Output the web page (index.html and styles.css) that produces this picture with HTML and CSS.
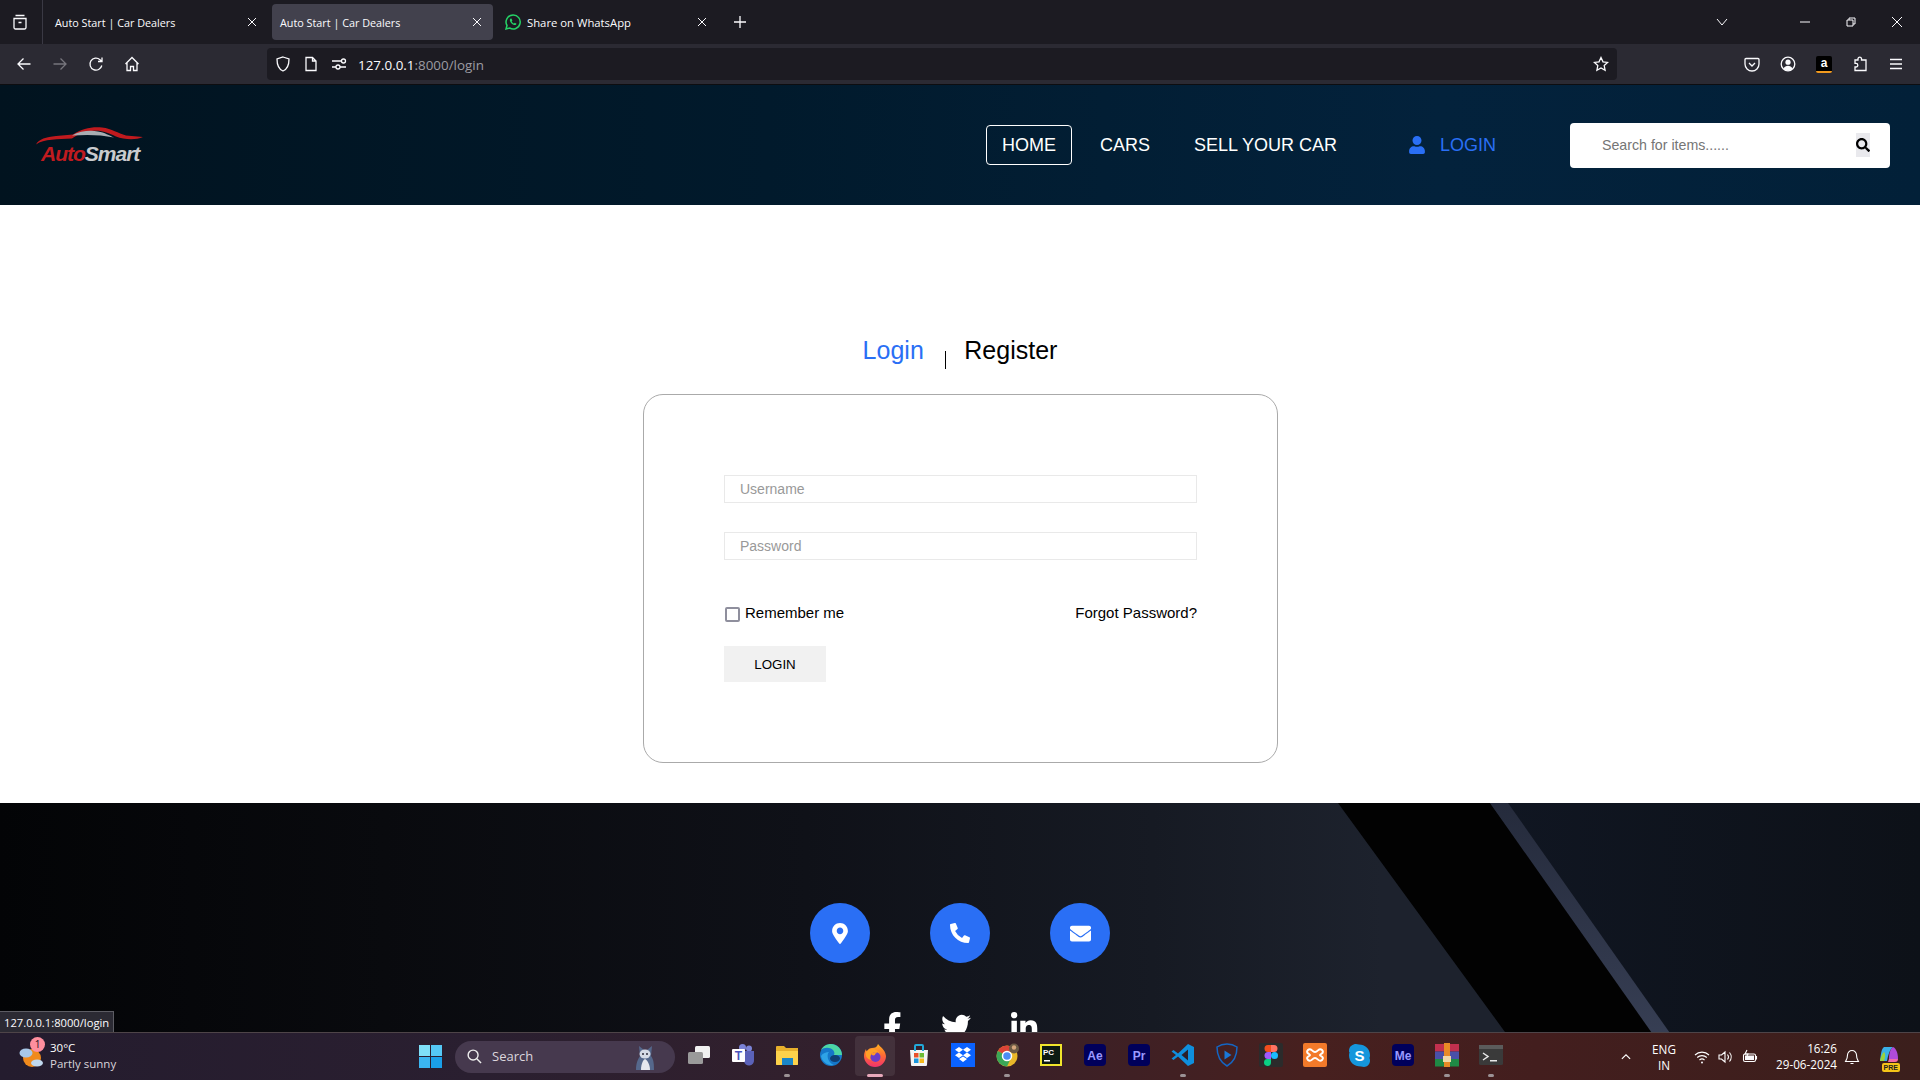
FILE: index.html
```html
<!DOCTYPE html>
<html lang="en">
<head>
<meta charset="utf-8">
<title>Auto Start | Car Dealers</title>
<link rel="stylesheet" href="styles.css">
</head>
<body>
<div class="browser">
  <div class="tabbar">
    <div class="tab-side">
      <svg class="ci" viewBox="0 0 16 16"><path d="M3.5 1.5h9M2 4.5h12v9a1.5 1.5 0 0 1-1.5 1.5h-9A1.5 1.5 0 0 1 2 13.500zM6.500 8.500h3"/></svg>
    </div>
    <div class="tab"><span class="tab-title">Auto Start | Car Dealers</span><svg class="tab-x" viewBox="0 0 10 10"><path d="M1 1l8 8M9 1l-8 8"/></svg></div>
    <div class="tab tab-active"><span class="tab-title">Auto Start | Car Dealers</span><svg class="tab-x" viewBox="0 0 10 10"><path d="M1 1l8 8M9 1l-8 8"/></svg></div>
    <div class="tab tab-wa">
      <svg class="wa" viewBox="0 0 16 16"><path d="M8 1a7 7 0 0 0-6 10.500L1 15l3.600-1A7 7 0 1 0 8 1z" fill="none" stroke="#25d366" stroke-width="1.500"/><path d="M5.700 4.500c-.9.500-1.100 1.700-.5 3 .8 1.700 2.300 3 3.900 3.500 1.200.3 2.200-.2 2.400-1.200l-1.700-1-.8.800c-1-.4-1.900-1.300-2.300-2.300l.7-.8-1-2z" fill="#25d366"/></svg>
      <span class="tab-title tab-title-wa">Share on WhatsApp</span><svg class="tab-x" viewBox="0 0 10 10"><path d="M1 1l8 8M9 1l-8 8"/></svg>
    </div>
    <svg class="tab-plus" viewBox="0 0 14 14"><path d="M7 1v12M1 7h12"/></svg>
    <div class="win-ctrls">
      <svg class="win-chev" viewBox="0 0 12 8"><path d="M1 1l5 6 5-6"/></svg>
      <svg class="win-btn win-min" viewBox="0 0 10 10"><path d="M0 5h10"/></svg>
      <svg class="win-btn win-res" viewBox="0 0 10 10"><path d="M1 3h6v6H1zM3 3V1h6v6H7"/></svg>
      <svg class="win-btn" viewBox="0 0 10 10"><path d="M0 0l10 10M10 0L0 10"/></svg>
    </div>
  </div>

  <div class="toolbar">
    <div class="nav-btns">
      <svg class="ci" viewBox="0 0 16 16"><path d="M14.500 8H2M7.500 2.500L2 8l5.500 5.500"/></svg>
      <svg class="ci ci-dim" viewBox="0 0 16 16"><path d="M1.500 8H14M8.500 2.500L14 8l-5.500 5.500"/></svg>
      <svg class="ci" viewBox="0 0 16 16"><path d="M13.800 9.500A6 6 0 1 1 12 3.700L14 5.500M14 1.500v4h-4"/></svg>
      <svg class="ci" viewBox="0 0 16 16"><path d="M1.500 8L8 1.500 14.500 8M3 7v7.500h3.500v-4h3v4H13V7"/></svg>
    </div>
    <div class="urlbar">
      <svg class="ci" viewBox="0 0 16 16"><path d="M8 1l6 2c0 6-1 10-6 12C3 13 2 9 2 3z"/></svg>
      <svg class="ci" viewBox="0 0 16 16"><path d="M3 1.500h6.500L13 5v9.500H3zM9.500 1.500V5H13"/></svg>
      <svg class="ci" viewBox="0 0 16 16"><path d="M1 5h9M1 11h4M9 11h6"/><circle cx="12.500" cy="5" r="2"/><circle cx="7" cy="11" r="2"/></svg>
      <span class="url"><span class="url-host">127.0.0.1</span>:8000/login</span>
      <svg class="ci url-star" viewBox="0 0 16 16"><path d="M8 1.500l2 4.300 4.600.6-3.400 3.200.9 4.700L8 12l-4.100 2.300.9-4.700L1.400 6.400 6 5.800z"/></svg>
    </div>
    <div class="tool-right">
      <svg class="ci" viewBox="0 0 16 16"><path d="M2 2.500h12a1 1 0 0 1 1 1V8a7 7 0 0 1-14 0V3.500a1 1 0 0 1 1-1zM5 7l3 3 3-3"/></svg>
      <svg class="ci" viewBox="0 0 16 16"><circle cx="8" cy="8" r="6.800"/><circle class="ci-fill" cx="8" cy="6.200" r="2.600"/><path class="ci-fill" d="M3.500 12.500c1-2 2.700-2.800 4.500-2.800s3.500.8 4.500 2.800a6 6 0 0 1-9 0z"/></svg>
      <span class="amazon">a</span>
      <svg class="ci" viewBox="0 0 16 16"><path d="M6 2.500a1.800 1.800 0 0 1 3.500 0V4H14v10.500H3V11h1a1.800 1.800 0 0 0 0-3.600H3V4h3z"/></svg>
      <svg class="ci" viewBox="0 0 16 16"><path d="M2 3.500h12M2 8h12M2 12.500h12"/></svg>
    </div>
  </div>

  <div class="viewport">
    <header class="site-header">
      <a class="logo">
        <svg class="logo-car" viewBox="0 0 107 20">
          <path d="M0 17.500C3 12 10 10 20 9L37 7.500C46 1.500 56-.5 66 .5c10 1 16 6 24 8l17 1.500c-8 3.500-19 2.500-27-.5C72 6 66 3 56 4c-9 1-15 4-20 7.500-14 1-28 0-36 6z" fill="#c01a1e"/>
          <path d="M36 8.500C44 4 54 3 62 4.500c7 1 11 4 16 6-14-3-28-3-42-2z" fill="#a9adb2"/>
        </svg>
        <span class="logo-text"><span class="logo-auto">Auto</span><span class="logo-smart">Smart</span></span>
      </a>
      <nav class="site-nav">
        <a class="nav-link nav-home">HOME</a>
        <a class="nav-link nav-cars">CARS</a>
        <a class="nav-link nav-sell">SELL YOUR CAR</a>
        <a class="nav-link nav-login">
          <svg class="user-ic" viewBox="0 0 448 512"><path d="M224 256c70.700 0 128-57.300 128-128S294.700 0 224 0 96 57.300 96 128s57.300 128 128 128zm89.600 32h-16.700c-22.200 10.200-46.900 16-72.900 16s-50.600-5.800-72.900-16h-16.700C60.200 288 0 348.200 0 422.400V464c0 26.500 21.500 48 48 48h352c26.500 0 48-21.500 48-48v-41.600c0-74.200-60.200-134.400-134.400-134.400z"/></svg>
          LOGIN
        </a>
      </nav>
      <form class="site-search">
        <input class="search-input" type="text" placeholder="Search for items......">
        <span class="search-btn"><svg viewBox="0 0 512 512"><path d="M505 442.700L405.300 343c-4.500-4.500-10.600-7-17-7H372c27.600-35.300 44-79.700 44-128C416 93.100 322.900 0 208 0S0 93.100 0 208s93.100 208 208 208c48.300 0 92.700-16.400 128-44v16.300c0 6.400 2.500 12.500 7 17l99.700 99.700c9.400 9.400 24.600 9.400 33.900 0l28.300-28.300c9.400-9.400 9.400-24.600.1-34zM208 336c-70.700 0-128-57.200-128-128 0-70.700 57.200-128 128-128 70.700 0 128 57.200 128 128 0 70.700-57.200 128-128 128z"/></svg></span>
      </form>
    </header>

    <main class="login-page">
      <div class="auth-tabs">
        <a class="auth-tab auth-active">Login</a>
        <span class="auth-sep"></span>
        <a class="auth-tab">Register</a>
      </div>
      <form class="login-card">
        <input class="field field-user" type="text" placeholder="Username">
        <input class="field field-pass" type="password" placeholder="Password">
        <div class="login-row">
          <label class="remember"><input class="check" type="checkbox"><span>Remember me</span></label>
          <a class="forgot">Forgot Password?</a>
        </div>
        <button class="login-btn" type="button">LOGIN</button>
      </form>
    </main>

    <footer class="site-footer">
      <svg class="footer-bg" viewBox="0 0 1920 277" preserveAspectRatio="none">
        <defs>
          <linearGradient id="fr" x1="0" x2="1" y1="0" y2="0"><stop offset="0" stop-color="#101622"/><stop offset="1" stop-color="#0d1118"/></linearGradient>
          <linearGradient id="fs" x1="0" x2="0" y1="0" y2="1"><stop offset="0" stop-color="#252b3c"/><stop offset="1" stop-color="#3a4258"/></linearGradient>
        </defs>
        <polygon points="1490,0 1920,0 1920,277 1685,277" fill="url(#fr)"/>
        <polygon points="1338,0 1490,0 1690,277 1540,277" fill="#020202"/>
        <polygon points="1490,0 1508,0 1703,277 1685,277" fill="url(#fs)"/>
      </svg>
      <div class="contact-row">
        <span class="contact-dot"><svg class="ic-pin" viewBox="0 0 384 512"><path d="M172.268 501.670C26.970 291.031 0 253.280 0 192 0 85.961 85.961 0 192 0s192 85.961 192 192c0 61.280-26.970 99.031-172.268 309.670-9.535 13.774-29.930 13.773-39.464 0zM192 272c44.183 0 80-35.817 80-80s-35.817-80-80-80-80 35.817-80 80 35.817 80 80 80z"/></svg></span>
        <span class="contact-dot"><svg class="ic-phone" viewBox="0 0 512 512"><path d="M497.390 361.800l-112-48a24 24 0 0 0-28 6.900l-49.600 60.600A370.660 370.660 0 0 1 130.600 204.110l60.600-49.600a23.940 23.940 0 0 0 6.900-28l-48-112A24.160 24.160 0 0 0 122.600.610l-104 24A24 24 0 0 0 0 48c0 256.500 207.900 464 464 464a24 24 0 0 0 23.400-18.600l24-104a24.290 24.290 0 0 0-14.010-27.600z"/></svg></span>
        <span class="contact-dot"><svg class="ic-mail" viewBox="0 0 512 512"><path d="M502.300 190.800c3.900-3.100 9.700-.2 9.700 4.700V400c0 26.500-21.500 48-48 48H48c-26.500 0-48-21.500-48-48V195.600c0-5 5.700-7.800 9.700-4.700 22.400 17.400 52.100 39.500 154.100 113.600 21.100 15.400 56.700 47.800 92.200 47.600 35.700.3 72-32.800 92.300-47.600 102-74.100 131.600-96.300 154-113.700zM256 320c23.200.4 56.600-29.200 73.400-41.400 132.700-96.300 142.800-104.700 173.400-128.700 5.800-4.500 9.200-11.500 9.200-18.900v-19c0-26.500-21.500-48-48-48H48C21.500 64 0 85.500 0 112v19c0 7.400 3.400 14.300 9.200 18.900 30.600 23.900 40.700 32.400 173.400 128.700 16.800 12.200 50.200 41.800 73.400 41.400z"/></svg></span>
      </div>
      <div class="social-row">
        <svg class="soc soc-f" viewBox="0 0 320 512"><path d="M279.140 288l14.220-92.660h-88.910v-60.130c0-25.350 12.420-50.060 52.240-50.060h40.420V6.260S260.430 0 225.360 0c-73.220 0-121.080 44.380-121.080 124.720v70.620H22.890V288h81.390v224h100.170V288z"/></svg>
        <svg class="soc soc-t" viewBox="0 0 512 512"><path d="M459.370 151.716c.325 4.548.325 9.097.325 13.645 0 138.720-105.583 298.558-298.558 298.558-59.452 0-114.680-17.219-161.137-47.106 8.447.974 16.568 1.299 25.340 1.299 49.055 0 94.213-16.568 130.274-44.832-46.132-.975-84.792-31.188-98.112-72.772 6.498.974 12.995 1.624 19.818 1.624 9.421 0 18.843-1.300 27.614-3.573-48.081-9.747-84.143-51.980-84.143-102.985v-1.299c13.969 7.797 30.214 12.670 47.431 13.319-28.264-18.843-46.781-51.005-46.781-87.391 0-19.492 5.197-37.360 14.294-52.954 51.655 63.675 129.300 105.258 216.365 109.807-1.624-7.797-2.599-15.918-2.599-24.040 0-57.828 46.782-104.934 104.934-104.934 30.213 0 57.502 12.670 76.670 33.137 23.715-4.548 46.456-13.320 66.599-25.340-7.798 24.366-24.366 44.833-46.132 57.827 21.117-2.273 41.584-8.122 60.426-16.243-14.292 20.791-32.161 39.308-52.628 54.253z"/></svg>
        <svg class="soc soc-in" viewBox="0 0 448 512"><path d="M100.280 448H7.400V148.900h92.880zM53.790 108.100C24.090 108.100 0 83.500 0 53.800a53.790 53.790 0 0 1 107.580 0c0 29.700-24.100 54.300-53.790 54.300zM447.900 448h-92.680V302.400c0-34.700-.7-79.200-48.290-79.200-48.290 0-55.690 37.700-55.690 76.700V448h-92.780V148.900h89.080v40.800h1.300c12.400-23.500 42.690-48.300 87.880-48.300 94 0 111.280 61.900 111.280 142.300V448z"/></svg>
      </div>
    </footer>
    <div class="status-tip">127.0.0.1:8000/login</div>
  </div>
</div>

<div class="taskbar">
  <div class="weather">
    <span class="weather-ic">
      <svg viewBox="0 0 26 26"><circle cx="14" cy="15" r="9" fill="#f08a1c"/><ellipse cx="8" cy="10" rx="6.500" ry="4.500" fill="#a8c8e8"/><ellipse cx="19" cy="20" rx="6" ry="3.500" fill="#c0d8ee"/></svg>
      <span class="weather-badge">1</span>
    </span>
    <span class="weather-text"><span>30°C</span><span class="weather-sub">Partly sunny</span></span>
  </div>
  <svg class="win-logo" viewBox="0 0 24 24"><path fill="#7fe0f8" d="M0 0h11.500v11.500H0z"/><path fill="#55c8f5" d="M12.500 0H24v11.500H12.500z"/><path fill="#3bb5f0" d="M0 12.500h11.500V24H0z"/><path fill="#1a9fe8" d="M12.500 12.500H24V24H12.500z"/></svg>
  <div class="tb-search">
    <svg class="tb-q" viewBox="0 0 16 16"><circle cx="6.500" cy="6.500" r="5.300"/><path d="M10.500 10.500L15 15"/></svg>
    <span class="tb-search-label">Search</span>
    <svg class="tb-owl" viewBox="0 0 24 26"><path d="M3 26c0-7 2-11 4-14L6 2l5 4h3l5-4-1 10c3 4 3 9 3 14z" fill="#55688c"/><ellipse cx="12" cy="10" rx="5.500" ry="4.500" fill="#d5dbe6"/><circle cx="10" cy="10" r="1" fill="#2b2b3a"/><circle cx="14" cy="10" r="1" fill="#2b2b3a"/><path d="M8 26c0-6 2-10 4-11 2 1 5 5 5 11z" fill="#e4e7ee"/></svg>
  </div>
  <div class="tb-apps">
    <span class="app"><svg viewBox="0 0 24 24"><rect x="8" y="3" width="15" height="12" rx="1.500" fill="#f1f1f1"/><rect x="1" y="9" width="15" height="12" rx="1.500" fill="#9a9a9a"/></svg></span>
    <span class="app"><svg viewBox="0 0 24 24"><circle cx="18" cy="5.500" r="3" fill="#7b83d6"/><circle cx="11.500" cy="4.500" r="3.500" fill="#7b83d6"/><path d="M10 8h13v9a5 5 0 0 1-10 1H10z" fill="#5b62b8"/><rect x="1" y="6" width="13" height="13" rx="1" fill="#fff"/><text class="app-t app-t-teams" x="7.500" y="16.500">T</text></svg></span>
    <span class="app app-run"><svg viewBox="0 0 24 24"><path d="M1 4a1 1 0 0 1 1-1h7l2 2h12v16a1 1 0 0 1-1 1H2a1 1 0 0 1-1-1z" fill="#e8b02c"/><path d="M1 8h22v13a1 1 0 0 1-1 1H2a1 1 0 0 1-1-1z" fill="#fdd24b"/><rect x="7" y="15" width="11" height="7" fill="#1a86c8"/></svg></span>
    <span class="app"><svg viewBox="0 0 24 24"><circle cx="12" cy="12" r="11" fill="#1577c9"/><path d="M23 12c0-6-5-11-11-11C8 1 4 3 2 7c3-3 9-3 12 0 1 1 2 3 1 5h8z" fill="#4dd6a4"/><ellipse cx="16" cy="15.500" rx="5" ry="3.500" fill="#0f3f74"/><path d="M10 9c-3 3-1 11 5 13-6 1-12-3-13-9 2-3 5-4 8-4z" fill="#2ea3e6"/></svg></span>
    <span class="app app-cur"><svg viewBox="0 0 24 24"><defs><linearGradient id="ff" x1="0" x2="0" y1="0" y2="1"><stop offset="0" stop-color="#ffb21f"/><stop offset=".5" stop-color="#ff6a35"/><stop offset="1" stop-color="#f0326e"/></linearGradient></defs><path d="M15 1c2 3 7 5 8 12a11 11 0 0 1-22 0c0-3 1-5 2-7 0 1 .5 2 1 2.500C5 6 7 5 9 5c3 0 5-1 6-4z" fill="url(#ff)"/><path d="M3 9c2-3 7-4 10-2 4 2 5 6 3 9-2-5-6-5-8-3-1 1-1 3 0 4-4-1-6-4-5-8z" fill="#ffa126"/><circle cx="12.500" cy="14" r="5" fill="#6a3cc8"/><path d="M8 11c1-2 5-3 7-1-2 0-3 .5-3 2-2 1-3 0-4-1z" fill="#ff9a26"/></svg></span>
    <span class="app"><svg viewBox="0 0 24 24"><path d="M3 7h18l-1 15a1 1 0 0 1-1 1H5a1 1 0 0 1-1-1z" fill="#f4f4f4"/><path d="M8 8V3a1 1 0 0 1 1-1h6a1 1 0 0 1 1 1v5" fill="none" stroke="#22a8d8" stroke-width="2"/><path fill="#e8502a" d="M7 10h4.500v4.500H7z"/><path fill="#6dbb33" d="M12.500 10H17v4.500h-4.500z"/><path fill="#1b96dd" d="M7 15.500h4.500V20H7z"/><path fill="#f6b91c" d="M12.500 15.500H17V20h-4.500z"/></svg></span>
    <span class="app"><svg viewBox="0 0 24 24"><rect width="24" height="24" fill="#0a62ff"/><path fill="#fff" d="M8 4l4 2.800L8 9.500 4 6.800zM16 4l4 2.800-4 2.700-4-2.700zM8 9.500l4 2.800-4 2.700-4-2.700zM16 9.500l4 2.800-4 2.700-4-2.700zM8 16l4-2.500 4 2.500-4 3z"/></svg></span>
    <span class="app app-run"><svg viewBox="0 0 24 24"><circle cx="12" cy="13" r="10.500" fill="#e9b72a"/><path d="M12 13L2.800 8A10.500 10.500 0 0 1 21.500 9H12z" fill="#dc4437"/><path d="M2.800 8A10.500 10.500 0 0 0 12 23.500L16 15z" fill="#3aa757"/><circle cx="12" cy="13" r="4.500" fill="#4c8cf5" stroke="#fff" stroke-width="1.500"/><circle cx="19" cy="5.500" r="5" fill="#6b5a45"/><circle cx="19" cy="4.500" r="2.200" fill="#d6a67c"/></svg></span>
    <span class="app"><svg viewBox="0 0 24 24"><rect x="1" y="1" width="22" height="22" fill="#f0e52c"/><rect x="3" y="3" width="18" height="18" fill="#0d1b13"/><text class="app-t app-t-pc" x="9.500" y="12">PC</text><path d="M5 17h6v1.500H5z" fill="#fff"/></svg></span>
    <span class="app"><svg viewBox="0 0 24 24"><rect x="1" y="1" width="22" height="22" rx="4" fill="#00005b"/><text class="app-t app-t-ae" x="12" y="17">Ae</text></svg></span>
    <span class="app"><svg viewBox="0 0 24 24"><rect x="1" y="1" width="22" height="22" rx="4" fill="#00005b"/><text class="app-t app-t-ae" x="12" y="17">Pr</text></svg></span>
    <span class="app app-run"><svg viewBox="0 0 24 24"><path d="M17 1l6 3v16l-6 3-10-9.500L2.500 17 .5 15.500 5 12 .5 8.500 2.500 7 7 10.500z" fill="#0f8fdd"/><path d="M17 6.500L10.500 12l6.500 5.500z" fill="#2b2028"/></svg></span>
    <span class="app"><svg viewBox="0 0 24 24"><path d="M12 1c4 0 7 1 10 3 0 9-3 15-10 19C5 19 2 13 2 4c3-2 6-3 10-3z" fill="none" stroke="#1466c4" stroke-width="1.500"/><path d="M9.500 7.500l7 4.500-7 4.500z" fill="#1a78d8"/></svg></span>
    <span class="app"><svg viewBox="0 0 24 24"><rect width="24" height="24" rx="2" fill="#2b2b2b"/><path d="M12 2H9a3.500 3.500 0 0 0 0 7h3z" fill="#f24e1e"/><path d="M12 2h3a3.500 3.500 0 0 1 0 7h-3z" fill="#ff7262"/><path d="M12 9H9a3.500 3.500 0 0 0 0 7h3z" fill="#a259ff"/><circle cx="15.500" cy="12.500" r="3.500" fill="#1abcfe"/><path d="M9 16h3v3.500A3.500 3.500 0 1 1 9 16z" fill="#0acf83"/></svg></span>
    <span class="app"><svg viewBox="0 0 24 24"><rect width="24" height="24" rx="2" fill="#f37a2a"/><path d="M5 7c3-3 4 2 7 2s4-5 7-2-2 4-2 5 5 2 2 5-4-2-7-2-4 5-7 2 2-4 2-5-5-2-2-5z" fill="none" stroke="#fff" stroke-width="2"/></svg></span>
    <span class="app"><svg viewBox="0 0 24 24"><path d="M2 8c0-5 4-7 7-7 1 0 2 .5 3 .5C18 1.500 23 6 23 12c0 1 0 2-.5 3 .5 1 .5 2 .5 3 0 3-3 6-6 6-1 0-2-.5-3-.5C7 23.500 2 19 2 12c0-1 .5-2 .5-3C2 9 2 8.500 2 8z" fill="#1596dc"/><text class="app-t app-t-sk" x="12.500" y="17.500">S</text></svg></span>
    <span class="app"><svg viewBox="0 0 24 24"><rect x="1" y="1" width="22" height="22" rx="4" fill="#00005b"/><text class="app-t app-t-ae" x="12" y="17">Me</text></svg></span>
    <span class="app app-run"><svg viewBox="0 0 24 24"><rect y="1" width="24" height="7.500" fill="#c2304e"/><rect y="8.500" width="24" height="7.500" fill="#4a50a8"/><rect y="16" width="24" height="7.500" fill="#1f8a45"/><rect x="9" y="0" width="6" height="24" fill="#e88a26"/><rect x="8" y="13" width="8" height="6" fill="#f0d8a8"/></svg></span>
    <span class="app app-run"><svg viewBox="0 0 24 24"><rect y="2" width="24" height="20" rx="1.500" fill="#3a3a3a"/><rect y="2" width="24" height="4" fill="#5b5b5b"/><path d="M4 10l5 3.500-5 3.500" fill="none" stroke="#e8e8e8" stroke-width="1.500"/><path d="M11 17h7v1.500h-7z" fill="#e8e8e8"/></svg></span>
  </div>
  <div class="tray">
    <svg class="tray-ic tray-caret" viewBox="0 0 16 16"><path d="M2.500 10.500L8 5l5.500 5.500"/></svg>
    <span class="tray-lang"><span>ENG</span><span>IN</span></span>
    <svg class="tray-ic" viewBox="0 0 16 16"><path d="M1 6a10 10 0 0 1 14 0M3.200 8.500a7 7 0 0 1 9.600 0M5.500 11a3.800 3.800 0 0 1 5 0"/><circle class="ci-fill" cx="8" cy="13.500" r="1"/></svg>
    <svg class="tray-ic" viewBox="0 0 16 16"><path d="M1 6v4h2.500L7 13V3L3.500 6zM9.500 5.500a4 4 0 0 1 0 5M11.500 3.500a7 7 0 0 1 0 9"/></svg>
    <svg class="tray-ic" viewBox="0 0 16 16"><rect x="1.500" y="5" width="12" height="7.500" rx="1.500"/><path class="ci-fill" d="M3 6.500h9v4.500H3z"/><path d="M14.500 7v3.500M5 1l-2 4h3l-1.500 3"/></svg>
    <span class="tray-time"><span>16:26</span><span>29-06-2024</span></span>
    <svg class="tray-ic tray-bell" viewBox="0 0 16 16"><path d="M8 1.500a4.500 4.500 0 0 1 4.500 4.500c0 4 1.500 5.500 2 6.500h-13c.5-1 2-2.500 2-6.500A4.500 4.500 0 0 1 8 1.500zM6.500 14.500h3"/></svg>
    <span class="copilot">
      <svg viewBox="0 0 24 24"><path d="M8 2h9c-3 2-5 8-6 14H4C5 10 5 4 8 2z" fill="#3ab0e8"/><path d="M4 16c1-5 2-7 4-9 2 2 1 6 0 9z" fill="#9bd23c"/><path d="M17 2c3 1 5 6 5 12H13c0-5 1-10 4-12z" fill="#b04bd8"/><path d="M13 14h9c0 2-1 3-3 3h-7z" fill="#f06aa8"/></svg>
      <span class="copilot-pre">PRE</span>
    </span>
  </div>
</div>
</body>
</html>
```

FILE: styles.css
```css
* { box-sizing: border-box; }
html, body { margin: 0; height: 100%; overflow: hidden; }
body {
  display: flex;
  flex-direction: column;
  height: 100vh;
  font-family: "Liberation Sans", Arial, sans-serif;
  color: #000;
  background: #fff;
}
a { text-decoration: none; color: inherit; }
svg { display: block; flex: none; }

.browser { flex: 1; min-height: 0; display: flex; flex-direction: column; }

/* icon strokes */
.ci { width: 16px; height: 16px; fill: none; stroke: #fbfbfe; stroke-width: 1.300; }
.ci-dim { stroke: #77767d; }
.ci-fill { fill: #fbfbfe; stroke: none; }

/* tab strip */
.tabbar {
  height: 44px;
  flex: none;
  display: flex;
  align-items: center;
  background: #1c1b22;
  font-family: "Open Sans", "Noto Sans", sans-serif;
  font-size: 10.800px;
  color: #fbfbfe;
}
.tab-side {
  width: 43px;
  height: 44px;
  flex: none;
  display: flex;
  align-items: center;
  padding-left: 12px;
  border-right: 1px solid #3a3944;
}
.tab {
  width: 229px;
  height: 36px;
  flex: none;
  display: flex;
  align-items: center;
  padding: 0 15px 0 12px;
  border-radius: 4px;
}
.tab-active { width: 221px; padding: 0 11px 0 8px; background: #42414d; }
.tab-wa { width: 229px; padding-left: 12px; gap: 6px; }
.tab-title { flex: 1; white-space: nowrap; }
.tab-title-wa { font-size: 11.300px; }
.tab-x { width: 10px; height: 10px; fill: none; stroke: #fbfbfe; stroke-width: 1; margin-right: 0; }
.wa { width: 16px; height: 18px; }
.tab-plus { width: 14px; height: 14px; margin-left: 11px; fill: none; stroke: #fbfbfe; stroke-width: 1.300; }
.win-ctrls { margin-left: auto; display: flex; align-items: center; padding-right: 18px; }
.win-chev { width: 12px; height: 8px; fill: none; stroke: #fbfbfe; stroke-width: 1; margin-right: 72px; }
.win-btn { width: 10px; height: 10px; fill: none; stroke: #fbfbfe; stroke-width: 1; }
.win-min { margin-right: 36px; }
.win-res { margin-right: 36px; }

/* navigation bar */
.toolbar {
  height: 41px;
  flex: none;
  display: flex;
  align-items: center;
  background: #2b2a33;
  border-bottom: 1px solid #0d0d10;
  font-family: "Open Sans", "Noto Sans", sans-serif;
}
.nav-btns { width: 267px; flex: none; display: flex; gap: 20px; padding-left: 16px; }
.urlbar {
  width: 1350px;
  height: 32px;
  flex: none;
  display: flex;
  align-items: center;
  gap: 12px;
  padding: 0 8px 0 8px;
  border-radius: 4px;
  background: #1c1b22;
}
.url { margin-left: -1px; padding-top: 2px; font-size: 13.400px; color: #9c9ba3; }
.url-host { color: #fbfbfe; }
.url-star { margin-left: auto; }
.tool-right { display: flex; align-items: center; gap: 20px; padding-left: 127px; }
.amazon {
  width: 16px;
  height: 17px;
  display: block;
  background: #000;
  border-radius: 2px;
  color: #fff;
  font: 700 12px/14px "Liberation Sans", sans-serif;
  text-align: center;
  border-bottom: 2px solid #f39a1e;
}

/* page area */
.viewport { position: relative; flex: 1; min-height: 0; overflow: hidden; display: flex; flex-direction: column; }

.site-header {
  height: 120px;
  flex: none;
  display: flex;
  align-items: center;
  padding: 0 30px 0 36px;
  background: linear-gradient(90deg, #01131f 0%, #011a2c 40%, #03223c 75%, #022038 100%);
}
.logo { width: 107px; flex: none; display: flex; flex-direction: column; margin-top: 1px; }
.logo-car { width: 107px; height: 20px; }
.logo-text {
  margin: -4px 0 0 5px;
  font-size: 21px;
  line-height: 22px;
  font-weight: 700;
  font-style: italic;
  letter-spacing: -1px;
  white-space: nowrap;
}
.logo-auto { color: #c01b1f; }
.logo-smart { color: #c9cbce; }

.site-nav { display: flex; align-items: center; margin-left: 843px; font-size: 18px; color: #fff; }
.nav-link { display: flex; align-items: center; white-space: nowrap; padding-top: 1px; }
.nav-home { width: 86px; height: 40px; justify-content: center; border: 1px solid #fff; border-radius: 4px; }
.nav-cars { margin-left: 28px; }
.nav-sell { margin-left: 44px; }
.nav-login { margin-left: 72px; gap: 15px; color: #2a6ff5; }
.user-ic { width: 16px; height: 18px; fill: #2a6ff5; margin-top: -2px; }

.site-search {
  width: 320px;
  height: 45px;
  flex: none;
  margin-left: auto;
  display: flex;
  align-items: center;
  padding: 0 20px 0 32px;
  background: #fff;
  border-radius: 4px;
}
.search-input {
  flex: 1;
  min-width: 0;
  border: 0;
  padding: 0;
  outline: 0;
  background: none;
  font: 14.200px "Liberation Sans", sans-serif;
}
.search-input::placeholder { color: #757575; opacity: 1; }
.search-btn {
  width: 14px;
  height: 24px;
  flex: none;
  display: flex;
  align-items: center;
  justify-content: center;
  background: #e9e9ed;
}
.search-btn svg { width: 14px; height: 14px; fill: #000; }

/* login */
.login-page {
  height: 598px;
  flex: none;
  display: flex;
  flex-direction: column;
  align-items: center;
  padding-top: 130px;
  background: #fff;
}
.auth-tabs { height: 30px; display: flex; align-items: flex-start; font-size: 25px; line-height: 30px; }
.auth-active { color: #2a6ff5; }
.auth-sep { width: 1.500px; height: 18px; margin: 16px 18px 0 21px; background: #000; }
.login-card {
  width: 635px;
  height: 369px;
  margin: 29px 0 0 1px;
  padding: 80px 80px 80px 80px;
  display: flex;
  flex-direction: column;
  background: #fff;
  border: 1px solid #aaa;
  border-radius: 20px;
}
.field {
  height: 27.500px;
  width: 100%;
  flex: none;
  padding: 0 15px;
  border: 1px solid #e9e9e9;
  outline: 0;
  background: #fff;
  font: 14px "Liberation Sans", sans-serif;
}
.field::placeholder { color: #999; opacity: 1; }
.field-pass { margin-top: 29.500px; }
.login-row {
  height: 22px;
  flex: none;
  margin-top: 43.500px;
  display: flex;
  align-items: center;
  justify-content: space-between;
  font-size: 15px;
  line-height: 20px;
}
.remember { display: flex; align-items: center; gap: 5px; }
.remember span, .forgot { margin-top: -2px; }
.check {
  appearance: none;
  width: 15px;
  height: 15px;
  margin: 0 0 0 1px;
  border: 2px solid #8f8f9d;
  border-radius: 2px;
  background: #fff;
}
.login-btn {
  width: 102px;
  height: 36px;
  flex: none;
  margin-top: 21px;
  border: 0;
  padding: 0;
  background: #f1f1f1;
  color: #000;
  font: 13.333px "Liberation Sans", sans-serif;
}

/* footer */
.site-footer {
  position: relative;
  flex: 1;
  min-height: 0;
  display: flex;
  flex-direction: column;
  align-items: center;
  padding-top: 100px;
  overflow: hidden;
  background: linear-gradient(90deg, #030406 0%, #090a0e 20%, #0f1118 42%, #161a23 60%, #1d222d 72%, #1d222d 100%);
}
.footer-bg { position: absolute; left: 0; top: 0; width: 1920px; height: 277px; }
.contact-row { position: relative; display: flex; gap: 60px; flex: none; }
.contact-dot {
  width: 60px;
  height: 60px;
  display: flex;
  align-items: center;
  justify-content: center;
  border-radius: 50%;
  background: #2a6ff5;
}
.contact-dot svg { fill: #fff; }
.ic-pin { width: 16px; height: 21px; }
.ic-phone { width: 20px; height: 20px; }
.ic-mail { width: 21px; height: 21px; }
.social-row { position: relative; flex: none; display: flex; gap: 40px; margin-top: 49px; }
.soc { height: 30px; fill: #fff; }
.soc-f { width: 18.750px; }
.soc-t { width: 30px; }
.soc-in { width: 26.250px; }

.status-tip {
  position: absolute;
  left: 0;
  bottom: 0;
  height: 21px;
  padding: 0 4px;
  display: flex;
  align-items: center;
  background: #2b2a33;
  border: 1px solid #5c5c63;
  border-left: 0;
  border-bottom: 0;
  color: #fbfbfe;
  font-family: "Open Sans", "Noto Sans", sans-serif;
  font-size: 11.200px;
  white-space: nowrap;
}

/* windows taskbar */
.taskbar {
  height: 48px;
  flex: none;
  display: flex;
  align-items: center;
  padding-left: 18px;
  border-top: 1px solid #4e4448;
  background: linear-gradient(90deg, #241c2e 0%, #2a1f30 25%, #33202c 45%, #47201f 68%, #431e1e 80%, #3b1f1c 100%);
  color: #fff;
  font-family: "Open Sans", "Noto Sans", sans-serif;
}
.weather { width: 401px; flex: none; display: flex; align-items: center; gap: 6px; font-size: 11.500px; line-height: 16px; margin-top: -2px; }
.weather-ic { position: relative; width: 26px; height: 26px; flex: none; }
.weather-ic svg { width: 26px; height: 26px; }
.weather-badge {
  position: absolute;
  left: 12px;
  top: -6px;
  width: 15px;
  height: 15px;
  border-radius: 50%;
  background: #ff8f9e;
  color: #1b1020;
  font-size: 10px;
  line-height: 15px;
  text-align: center;
}
.weather-text { display: flex; flex-direction: column; }
.weather-sub { color: #d9d4da; }
.win-logo { width: 23px; height: 23px; }
.tb-search {
  width: 220px;
  height: 32px;
  flex: none;
  margin-left: 13px;
  display: flex;
  align-items: center;
  padding: 0 14px 2px 12px;
  border-radius: 16px;
  background: #46394e;
  font-size: 13px;
  color: #dcd6dd;
}
.tb-q { width: 15px; height: 15px; fill: none; stroke: #eee; stroke-width: 1.500; margin-top: 1px; }
.tb-search-label { flex: 1; margin-left: 10px; }
.tb-owl { width: 24px; height: 26px; margin-right: 4px; margin-top: 2px; }
.tb-apps { display: flex; margin-left: 2px; }
.app {
  position: relative;
  width: 44px;
  height: 47px;
  flex: none;
  display: flex;
  align-items: center;
  justify-content: center;
  padding-bottom: 4px;
}
.app svg { position: relative; width: 24px; height: 24px; }
.app-run::after, .app-cur::after {
  content: "";
  position: absolute;
  left: 50%;
  bottom: 3px;
  width: 6px;
  height: 3px;
  margin-left: -3px;
  border-radius: 2px;
  background: #9c9295;
}
.app-cur::before {
  content: "";
  position: absolute;
  left: 2px;
  top: 3px;
  width: 40px;
  height: 40px;
  border-radius: 4px;
  background: rgba(255, 255, 255, .08);
}
.app-cur::after { width: 16px; margin-left: -8px; background: #e8a9bb; }
.app-t { font-family: "Liberation Sans", sans-serif; font-weight: 700; text-anchor: middle; }
.app-t-teams { font-size: 12px; fill: #4b53bc; }
.app-t-pc { font-size: 8px; fill: #fff; }
.app-t-ae { font-size: 12px; fill: #9a9aff; }
.app-t-sk { font-size: 15px; fill: #fff; }

.tray { margin-left: auto; display: flex; align-items: center; padding-right: 20px; font-size: 11.700px; line-height: 16px; }
.tray-ic { width: 16px; height: 16px; margin: 0 4px; fill: none; stroke: #fff; stroke-width: 1.100; }
.tray-caret { margin: 0 6px; width: 12px; height: 12px; stroke-width: 1.500; }
.tray-lang { width: 48px; margin: 0 2px 0 2px; display: flex; flex-direction: column; align-items: center; }
.tray-time { width: 67px; margin: -2px 0 0 8px; display: flex; flex-direction: column; align-items: flex-end; white-space: nowrap; }
.tray-bell { margin: 0 4px 0 7px; }
.copilot { position: relative; width: 24px; height: 24px; margin-left: 12px; flex: none; }
.copilot svg { width: 24px; height: 24px; }
.copilot-pre {
  position: absolute;
  right: 0;
  bottom: -3px;
  padding: 0 2px;
  border-radius: 2px;
  background: #f5c518;
  color: #222;
  font: 700 7px/9px "Liberation Sans", sans-serif;
}
```
